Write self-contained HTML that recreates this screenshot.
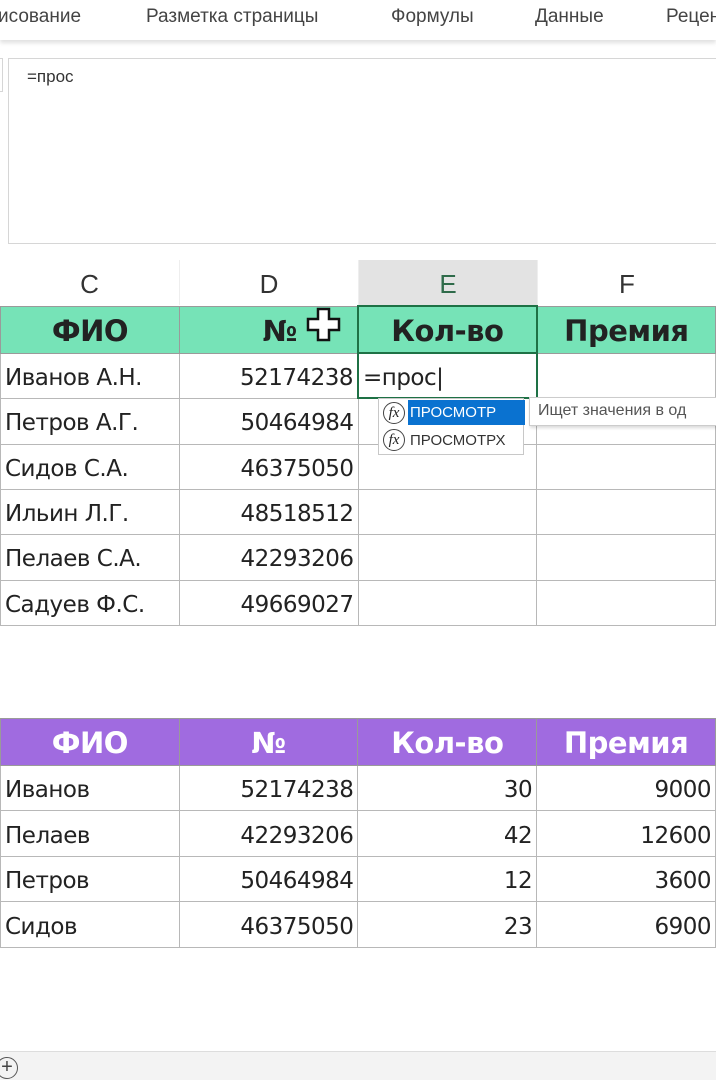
<!DOCTYPE html>
<html><head><meta charset="utf-8"><style>
*{margin:0;padding:0;box-sizing:border-box}
body{width:716px;height:1080px;background:#fff;position:relative;overflow:hidden;font-family:"Liberation Sans","DejaVu Sans",sans-serif;color:#222}
.a{position:absolute}
.rib{top:0;left:0;width:716px;height:40px;background:#fff;box-shadow:0 3px 4px rgba(0,0,0,.12);font-size:19px;color:#444}
.rib span{position:absolute;top:6px;white-space:nowrap}
.fb{left:8px;top:58px;width:720px;height:186px;border:1px solid #d6d6d6;background:#fff;font-size:17px;color:#333;padding:8px 0 0 18px}
.ch{top:260px;height:45px;font-size:26px;color:#333;text-align:center;line-height:48px;border-left:1px solid #eee}
table{position:absolute;left:0;border-collapse:collapse;table-layout:fixed;font-family:"DejaVu Sans","Liberation Sans",sans-serif}
td{width:179px;border:1px solid #b8b8b8;font-size:23px;padding:4px 4px 0;white-space:nowrap;overflow:hidden;color:#222;letter-spacing:-0.5px}
td.r{text-align:right}
tr.h td{font-weight:bold;font-size:29px;text-align:center;border-color:#9a9a9a;padding-top:2px}
</style></head><body>
<div class="a rib">
<span style="left:-2px">исование</span><span style="left:146px">Разметка страницы</span><span style="left:391px">Формулы</span><span style="left:535px">Данные</span><span style="left:666px">Рецен</span>
</div>
<div class="a" style="left:0;top:58px;width:3px;height:34px;border:1px solid #d6d6d6;border-left:none"></div>
<div class="a fb">=прос</div>
<div class="a ch" style="left:0;width:179px;border-left:none">C</div>
<div class="a ch" style="left:179px;width:179px">D</div>
<div class="a ch" style="left:358px;width:179px;background:#e3e3e3;color:#2f6b4a">E</div>
<div class="a ch" style="left:537px;width:179px">F</div>

<table style="top:305px">
<tr class="h" style="height:47px;background:#76e3b7"><td>ФИО</td><td class="r" style="padding-right:60px;text-align:right">№</td><td style="border:2px solid #1e7145;border-bottom:none">Кол-во</td><td>Премия</td></tr>
<tr style="height:45px"><td>Иванов А.Н.</td><td class="r">52174238</td><td style="border:2px solid #1e7145">=прос|</td><td></td></tr>
<tr style="height:46px"><td>Петров А.Г.</td><td class="r">50464984</td><td></td><td></td></tr>
<tr style="height:45px"><td>Сидов С.А.</td><td class="r">46375050</td><td></td><td></td></tr>
<tr style="height:45px"><td>Ильин Л.Г.</td><td class="r">48518512</td><td></td><td></td></tr>
<tr style="height:46px"><td>Пелаев С.А.</td><td class="r">42293206</td><td></td><td></td></tr>
<tr style="height:45px"><td>Садуев Ф.С.</td><td class="r">49669027</td><td></td><td></td></tr>
</table>
<svg class="a" style="left:305px;top:306px" width="38" height="38" viewBox="0 0 38 38"><path d="M13 3h11v10h10v11H24v10H13V24H3V13h10z" fill="#fff" stroke="#111" stroke-width="2.5"/></svg>
<div class="a" style="left:378px;top:398px;width:146px;height:57px;background:#fff;border:1px solid #c8c8c8;font-size:15px">
<div style="position:absolute;left:29px;top:1px;width:117px;height:25px;background:#0a72d0"></div>
<div style="position:absolute;left:4px;top:3px;width:22px;height:22px;border:1px solid #444;border-radius:50%;font-family:'Liberation Serif',serif;font-style:italic;font-size:15px;text-align:center;line-height:20px">fx</div>
<div style="position:absolute;left:4px;top:30px;width:22px;height:22px;border:1px solid #444;border-radius:50%;font-family:'Liberation Serif',serif;font-style:italic;font-size:15px;text-align:center;line-height:20px">fx</div>
<div style="position:absolute;left:31px;top:5px;color:#fff">ПРОСМОТР</div>
<div style="position:absolute;left:31px;top:33px;color:#333">ПРОСМОТРХ</div>
</div>
<div class="a" style="left:529px;top:397px;width:200px;height:29px;background:#fff;border:1px solid #ccc;box-shadow:1px 2px 3px rgba(0,0,0,.15);font-size:16px;color:#555;padding:4px 0 0 8px;white-space:nowrap">Ищет значения в од</div>

<table style="top:718px">
<tr class="h" style="height:47px;background:#a06be0;color:#fff"><td style="color:#fff">ФИО</td><td style="color:#fff">№</td><td style="color:#fff">Кол-во</td><td style="color:#fff">Премия</td></tr>
<tr style="height:45px"><td>Иванов</td><td class="r">52174238</td><td class="r">30</td><td class="r">9000</td></tr>
<tr style="height:46px"><td>Пелаев</td><td class="r">42293206</td><td class="r">42</td><td class="r">12600</td></tr>
<tr style="height:45px"><td>Петров</td><td class="r">50464984</td><td class="r">12</td><td class="r">3600</td></tr>
<tr style="height:46px"><td>Сидов</td><td class="r">46375050</td><td class="r">23</td><td class="r">6900</td></tr>
</table>

<div class="a" style="left:0;top:1051px;width:716px;height:29px;background:#f3f3f3;border-top:1px solid #ddd"></div>
<div class="a" style="left:-4px;top:1057px;width:22px;height:22px;border:1.5px solid #555;border-radius:50%;text-align:center;line-height:19px;font-size:20px;color:#444">+</div>
</body></html>
